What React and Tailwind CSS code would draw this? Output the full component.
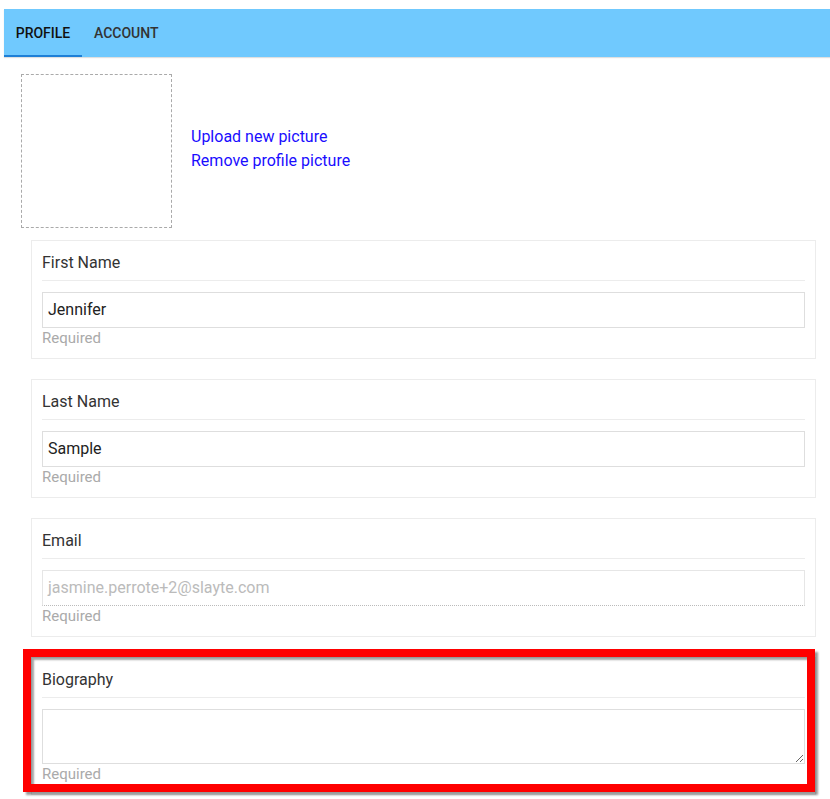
import React from "react";

function Card({ label, children }) {
  return (
    <div className="border border-[#ececec] px-[10px] pt-[10px] pb-[10px] bg-white">
      <div className="h-[30px] border-b border-[#ececec] text-[16px] leading-[24px] text-[#333]">{label}</div>
      <div className="mt-[11px]">{children}</div>
      <div className="h-[20px] text-[15px] leading-[20px] text-[#aaa]">Required</div>
    </div>
  );
}

export default function App() {
  return (
    <div className="w-[830px] h-[799px] overflow-hidden bg-white pt-[9px] pl-[4px]" style={{ fontFamily: "Roboto, 'Noto Sans', sans-serif" }}>
      <div className="h-[48px] bg-[#70c9fe] flex items-stretch shadow-[0_1px_1px_rgba(0,0,0,0.12)]">
        <div className="w-[78px] flex items-center justify-center border-b-2 border-[#1e7fd6] pt-[2px] text-[14px] font-medium text-[#111]">PROFILE</div>
        <div className="px-[12px] flex items-center text-[14px] font-medium text-[#333]">ACCOUNT</div>
      </div>

      <div className="ml-[17px] mt-[17px] flex items-center">
        <div className="w-[151px] h-[154px] border border-dashed border-[#aaa]"></div>
        <div className="ml-[19px] flex flex-col text-[16px] leading-[24px] text-[#1a0dff] -mt-[5px]">
          <span>Upload new picture</span>
          <span>Remove profile picture</span>
        </div>
      </div>

      <div className="ml-[27px] w-[785px] mt-[12px] flex flex-col gap-[20px]">
        <Card label="First Name">
          <div className="h-[36px] border border-[#dedede] px-[5px] flex items-center text-[16px] text-[#222]">Jennifer</div>
        </Card>
        <Card label="Last Name">
          <div className="h-[36px] border border-[#dedede] px-[5px] flex items-center text-[16px] text-[#222]">Sample</div>
        </Card>
        <Card label="Email">
          <div className="h-[36px] border border-[#e6e6e6] [border-bottom-style:dotted] border-b-[#bbb] px-[5px] flex items-center text-[16px] text-[#bbb]">jasmine.perrote+2@slayte.com</div>
        </Card>
        <div className="relative">
          <Card label="Biography">
            <textarea className="block w-full h-[55px] border border-[#dedede] outline-none resize-y" />
          </Card>
          <div className="absolute left-[-8px] top-[-8px] w-[792px] h-[143px] border-[8px] border-[#ff0000] shadow-[3px_3px_2px_rgba(0,0,0,0.4),inset_3px_3px_2px_rgba(0,0,0,0.35)] pointer-events-none"></div>
        </div>
      </div>
    </div>
  );
}
